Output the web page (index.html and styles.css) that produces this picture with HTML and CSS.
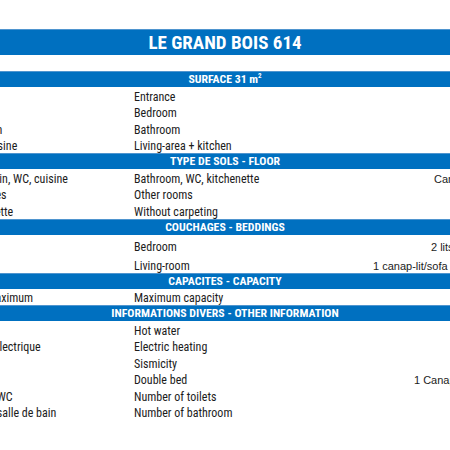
FILE: index.html
```html
<!DOCTYPE html>
<html lang="fr">
<head>
<meta charset="utf-8">
<title>Le Grand Bois 614</title>
<link rel="stylesheet" href="styles.css">
</head>
<body>
<div class="sheet">
  <div class="title">LE GRAND BOIS 614</div>
  <div class="blank"></div>

  <div class="section">SURFACE 31 m<sup>2</sup></div>
  <div class="row"><span class="fr">Entrée</span><span class="en">Entrance</span><span class="val"></span></div>
  <div class="row"><span class="fr">Chambre</span><span class="en">Bedroom</span><span class="val"></span></div>
  <div class="row"><span class="fr">Salle de bain</span><span class="en">Bathroom</span><span class="val"></span></div>
  <div class="row"><span class="fr">Séjour + cuisine</span><span class="en">Living-area + kitchen</span><span class="val"></span></div>

  <div class="section">TYPE DE SOLS - FLOOR</div>
  <div class="row"><span class="fr">Salles de bain, WC, cuisine</span><span class="en">Bathroom, WC, kitchenette</span><span class="val off-61">Carrelage</span></div>
  <div class="row"><span class="fr">Autres pièces</span><span class="en">Other rooms</span><span class="val"></span></div>
  <div class="row"><span class="fr">Sans moquette</span><span class="en">Without carpeting</span><span class="val"></span></div>

  <div class="section">COUCHAGES - BEDDINGS</div>
  <div class="row tall"><span class="fr">Chambre</span><span class="en">Bedroom</span><span class="val off-58">2 lits simples</span></div>
  <div class="row tall"><span class="fr">Séjour</span><span class="en">Living-room</span><span class="val">1 canap-lit/sofa</span></div>

  <div class="section">CAPACITES - CAPACITY</div>
  <div class="row"><span class="fr">Capacité maximum</span><span class="en">Maximum capacity</span><span class="val"></span></div>

  <div class="section">INFORMATIONS DIVERS - OTHER INFORMATION</div>
  <div class="row"><span class="fr">Eau chaude</span><span class="en">Hot water</span><span class="val"></span></div>
  <div class="row"><span class="fr">Chauffage électrique</span><span class="en">Electric heating</span><span class="val"></span></div>
  <div class="row"><span class="fr">Sismicité</span><span class="en">Sismicity</span><span class="val"></span></div>
  <div class="row"><span class="fr">Lit double</span><span class="en">Double bed</span><span class="val off-41">1 Canapé lit</span></div>
  <div class="row"><span class="fr">Nombre de WC</span><span class="en">Number of toilets</span><span class="val"></span></div>
  <div class="row"><span class="fr">Nombre de salle de bain</span><span class="en">Number of bathroom</span><span class="val"></span></div>
</div>
</body>
</html>
```

FILE: styles.css
```css
html, body {
  margin: 0;
  padding: 0;
  background: #ffffff;
  overflow: hidden;
}

.sheet {
  width: 570px;
  margin-left: -60px;
  padding-top: 29px;
  font-family: "Roboto Condensed", Roboto, "DejaVu Sans Condensed", sans-serif;
  color: #1c1c1c;
  display: flex;
  flex-direction: column;
}

.title {
  height: 26px;
  background: #0070c0;
  border-top: 1px solid #4f95cf;
  box-sizing: border-box;
  color: #ffffff;
  font-weight: bold;
  font-size: 19px;
  line-height: 25px;
  text-align: center;
}

.blank {
  height: 16px;
}

.section {
  height: 16px;
  background: #0070c0;
  border-top: 1px solid #4f95cf;
  box-sizing: border-box;
  color: #ffffff;
  font-weight: bold;
  font-size: 11.8px;
  line-height: 15px;
  text-align: center;
}

.section sup {
  font-size: 7px;
  line-height: 0;
  vertical-align: 5px;
}

.row {
  height: 16.5px;
  display: grid;
  grid-template-columns: 190px 239px 1fr;
  align-items: end;
  font-size: 12px;
  line-height: 13px;
  white-space: nowrap;
}

.row.tall {
  height: 19px;
}

.fr {
  margin-left: 2px;
}

.en {
  padding-left: 4px;
  font-size: 12px;
}

.val {
  padding-left: 4px;
  font-family: "Liberation Sans", Arial, sans-serif;
  font-size: 11px;
}

.off-41 { padding-left: 45px; }
.off-58 { padding-left: 62px; }
.off-61 { padding-left: 65px; }
```
